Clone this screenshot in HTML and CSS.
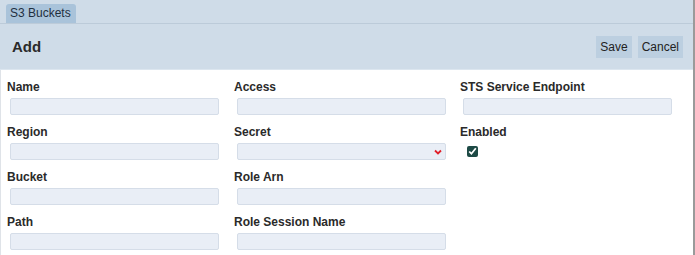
FILE: index.html
```html
<!DOCTYPE html>
<html>
<head>
    <title>S3 Buckets</title>
    <link rel="stylesheet" href="styles.css">
</head>
<body>
<div class="window">
    <div class="tabs">
        <div class="tab">S3 Buckets</div>
    </div>
    <div class="toolbar">
        <h2>Add</h2>
        <div class="actions">
            <button type="button">Save</button>
            <button type="button">Cancel</button>
        </div>
    </div>
    <form class="form">
        <div class="column">
            <div class="field">
                <label>Name</label>
                <input type="text">
            </div>
            <div class="field">
                <label>Region</label>
                <input type="text">
            </div>
            <div class="field">
                <label>Bucket</label>
                <input type="text">
            </div>
            <div class="field">
                <label>Path</label>
                <input type="text">
            </div>
        </div>
        <div class="column">
            <div class="field">
                <label>Access</label>
                <input type="text">
            </div>
            <div class="field">
                <label>Secret</label>
                <div class="select-wrap">
                    <select></select>
                    <svg class="chevron" width="8" height="6" viewBox="0 0 8 6">
                        <path d="M1 1.5 L4 4.5 L7 1.5" fill="none" stroke="#e0202a" stroke-width="1.8"/>
                    </svg>
                </div>
            </div>
            <div class="field">
                <label>Role Arn</label>
                <input type="text">
            </div>
            <div class="field">
                <label>Role Session Name</label>
                <input type="text">
            </div>
        </div>
        <div class="column">
            <div class="field">
                <label>STS Service Endpoint</label>
                <input type="text">
            </div>
            <div class="field">
                <label>Enabled</label>
                <input type="checkbox" class="check" checked>
            </div>
        </div>
    </form>
</div>
</body>
</html>
```

FILE: styles.css
```css
body {
    margin: 0;
    font-family: "Liberation Sans", Arial, sans-serif;
    color: #222;
}

.window {
    width: 695px;
    height: 255px;
    overflow: hidden;
    box-sizing: border-box;
    border-right: 2px solid #9a9a9a;
    background: #fff;
}

.tabs {
    background: #cfdce8;
    height: 24px;
    padding: 4px 0 0 6px;
    box-sizing: border-box;
    border-bottom: 1px solid #bccbd9;
    display: flex;
}

.tab {
    background: #a9c3da;
    border-radius: 3px 3px 0 0;
    font-size: 12px;
    line-height: 19px;
    padding: 0 5px 0 4px;
    color: #1f2f3f;
}

.toolbar {
    background: #cfdce8;
    height: 46px;
    box-sizing: border-box;
    display: flex;
    align-items: center;
    justify-content: space-between;
    padding: 0 10px 0 12px;
    border-bottom: 1px solid #dce6ef;
}

.toolbar h2 {
    margin: 0;
    font-size: 15px;
    font-weight: bold;
    color: #2a2a2a;
}

.actions {
    display: flex;
    gap: 6px;
}

.actions button {
    font-family: "Liberation Sans", Arial, sans-serif;
    font-size: 12px;
    background: #bccfe0;
    border: none;
    padding: 0 4px;
    height: 22px;
    color: #222;
}

.form {
    display: flex;
    padding: 10px 0 0 6px;
    border-left: 1px solid #dfe3e8;
    height: 185px;
    box-sizing: border-box;
}

.column {
    width: 227px;
    display: flex;
    flex-direction: column;
}

.column:nth-child(2) {
    width: 226px;
}

.field {
    display: flex;
    flex-direction: column;
    align-items: flex-start;
    height: 45px;
    flex-shrink: 0;
}

.field label {
    font-size: 12px;
    font-weight: bold;
    line-height: 15px;
    color: #2a2a2a;
}

.field input[type="text"],
.field select {
    margin: 3px 0 0 3px;
    width: 209px;
    height: 17px;
    box-sizing: border-box;
    background: #e9eef6;
    border: 1px solid #d5dde8;
    border-radius: 2px;
    padding: 0;
}

.select-wrap {
    position: relative;
}

.field select {
    appearance: none;
}

.chevron {
    position: absolute;
    right: 4px;
    top: 9px;
}

.field .check {
    margin: 6px 0 0 7px;
    width: 11px;
    height: 11px;
    accent-color: #1d4a45;
}
```
